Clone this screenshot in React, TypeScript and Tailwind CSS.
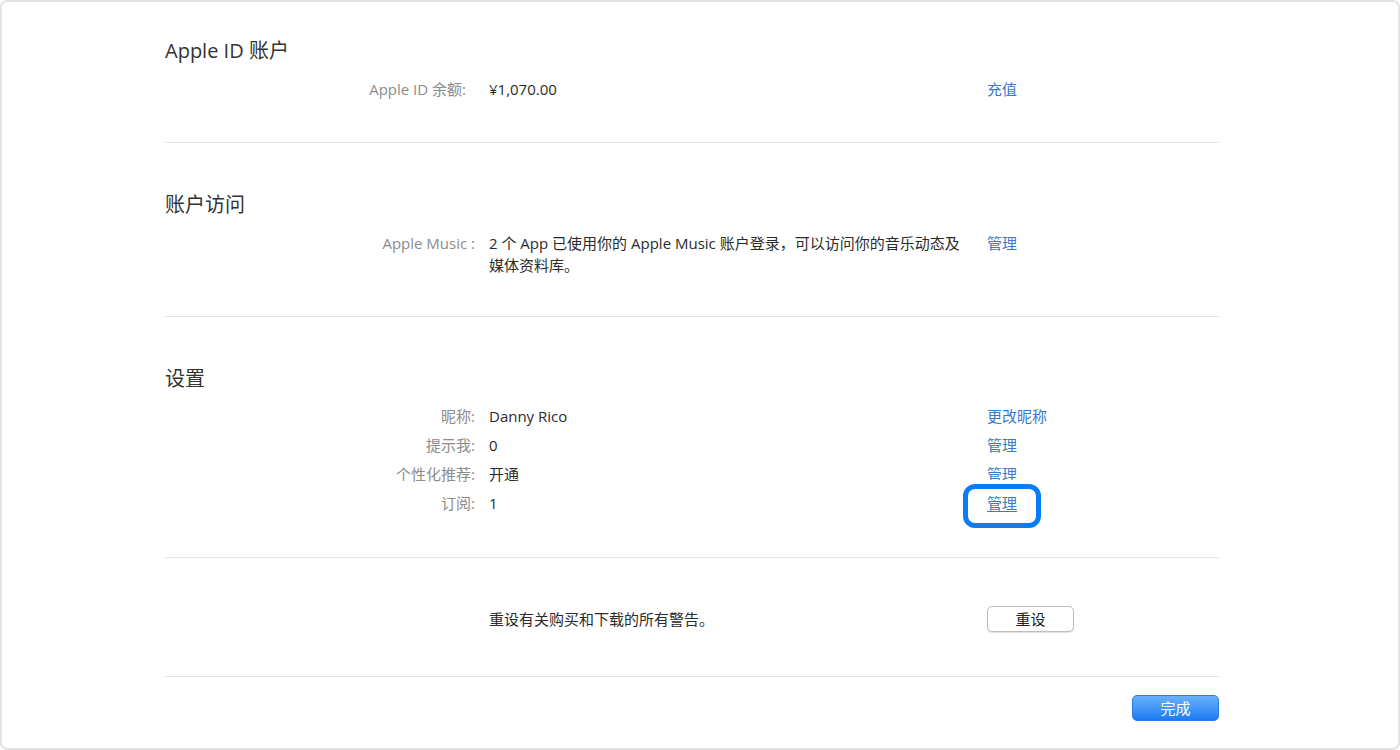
import React from "react";

const font = { fontFamily: '"Open Sans", "Noto Sans CJK SC", sans-serif' };

function Row({ label, value, link, highlight, labelPad }: { label: string; value: React.ReactNode; link?: string; highlight?: boolean; labelPad?: boolean }) {
  return (
    <div className="flex items-start leading-[29px] text-[15px]">
      <div className={"w-[310px] shrink-0 text-right text-[#8c8c8c] " + (labelPad ? "pr-[9px]" : "")}>{label}</div>
      <div className="ml-[14px] w-[498px] shrink-0 text-[#2b2b2b]">{value}</div>
      {link && (
        <div className="relative">
          {highlight && (
            <div className="absolute left-[-24px] top-[-5px] h-[44px] w-[78px] rounded-[12px] border-[5px] border-[#0a7df5] bg-white shadow-[0_0_0_4px_white]" />
          )}
          <span className={"relative text-[#3b78c6] " + (highlight ? "underline underline-offset-2" : "")}>{link}</span>
        </div>
      )}
    </div>
  );
}

function Sep() {
  return <div className="h-px bg-[#e6e6e6]" />;
}

export default function App() {
  return (
    <div style={font} className="h-[750px] w-[1400px] overflow-hidden rounded-[7px] border-2 border-[#e2e2e2] bg-white">
      <div className="ml-[163px] w-[1054px]">
        {/* Section 1 */}
        <div className="pt-[36px] pb-[38px]">
          <div className="text-[20px] leading-[26px] text-[#333]">Apple ID 账户</div>
          <div className="mt-[11px]">
            <Row label="Apple ID 余额:" value="¥1,070.00" link="充值" labelPad />
          </div>
        </div>
        <Sep />
        {/* Section 2 */}
        <div className="pt-[49px] pb-[40px]">
          <div className="text-[20px] leading-[26px] text-[#333]">账户访问</div>
          <div className="mt-[14px] flex items-start text-[15px] leading-[22px]">
            <div className="w-[310px] shrink-0 text-right text-[#8c8c8c]">Apple Music :</div>
            <div className="ml-[14px] w-[498px] shrink-0 text-[#2b2b2b]">
              2 个 App 已使用你的 Apple Music 账户登录，可以访问你的音乐动态及
              <br />
              媒体资料库。
            </div>
            <div className="text-[#3b78c6]">管理</div>
          </div>
        </div>
        <Sep />
        {/* Section 3 */}
        <div className="pt-[49px] pb-[39px]">
          <div className="text-[20px] leading-[26px] text-[#333]">设置</div>
          <div className="mt-[10px]">
            <Row label="昵称:" value="Danny Rico" link="更改昵称" />
            <Row label="提示我:" value="0" link="管理" />
            <Row label="个性化推荐:" value="开通" link="管理" />
            <Row label="订阅:" value="1" link="管理" highlight />
          </div>
        </div>
        <Sep />
        {/* Section 4 */}
        <div className="pt-[48px] pb-[44px]">
          <div className="flex items-center text-[15px] leading-[26px]">
            <div className="w-[310px] shrink-0" />
            <div className="ml-[14px] w-[498px] shrink-0 text-[#2b2b2b]">重设有关购买和下载的所有警告。</div>
            <button className="flex h-[26px] w-[87px] items-center justify-center rounded-[5px] border border-[#bdbdbd] bg-white text-[15px] text-[#222] shadow-[0_1px_1px_rgba(0,0,0,0.12)]">
              重设
            </button>
          </div>
        </div>
        <Sep />
        {/* Done */}
        <div className="flex justify-end pt-[18px]">
          <button className="flex h-[26px] w-[87px] items-center justify-center rounded-[5px] border border-[#2a7be6] bg-gradient-to-b from-[#66b1fb] to-[#1a7cf2] text-[15px] text-white">
            完成
          </button>
        </div>
      </div>
    </div>
  );
}
